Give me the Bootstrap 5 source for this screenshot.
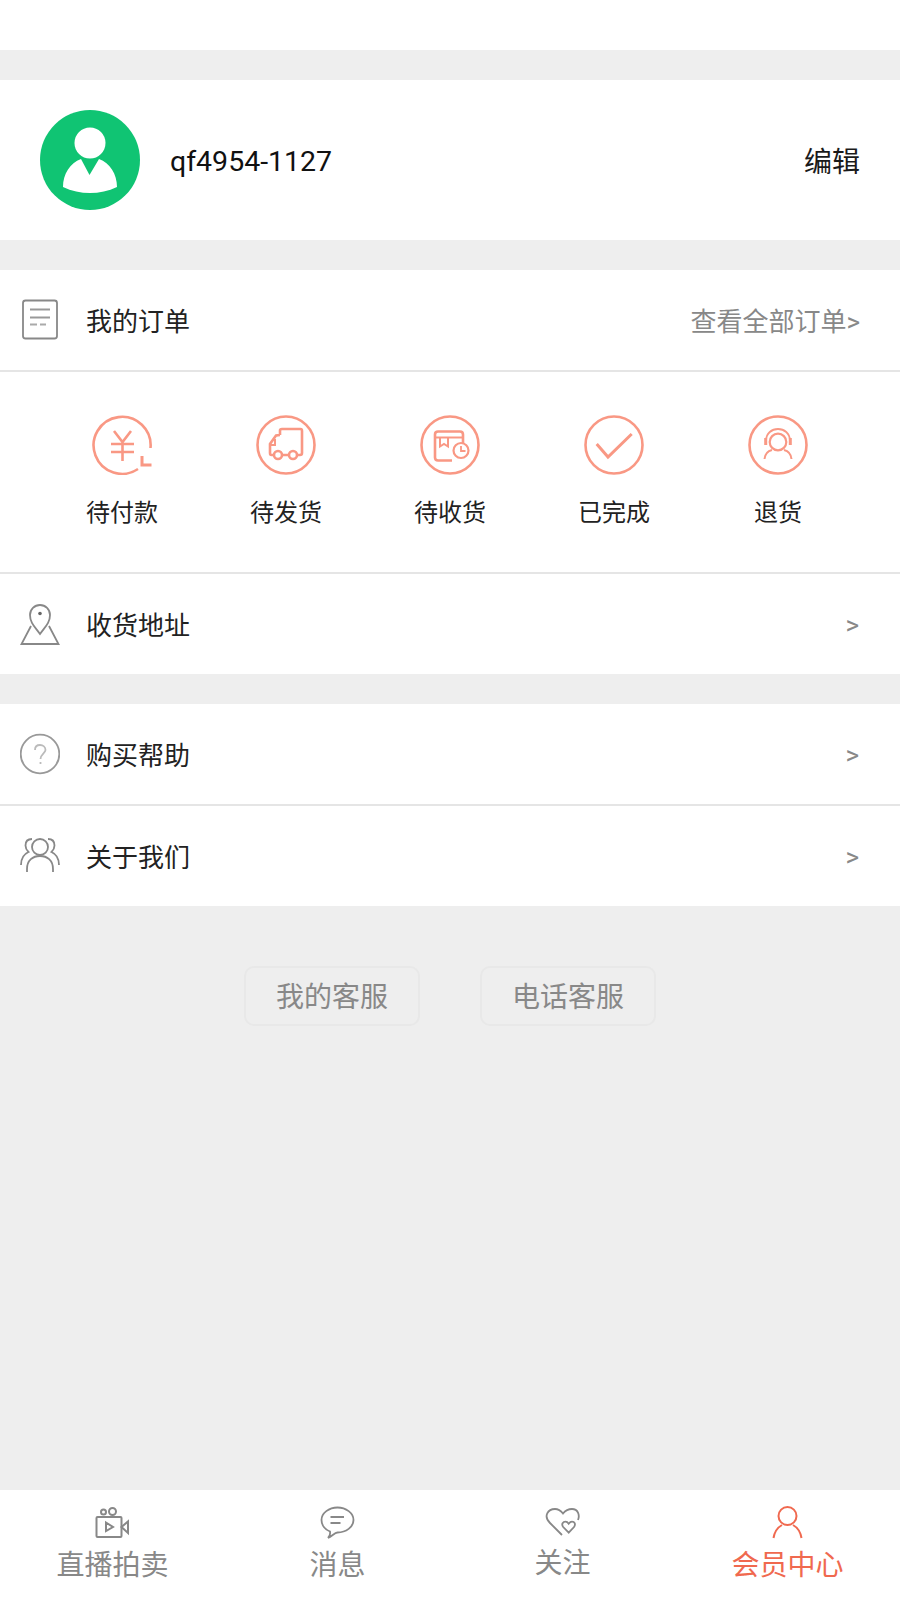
<!DOCTYPE html>
<html lang="zh">
<head>
<meta charset="utf-8">
<title>会员中心</title>
<link href="https://cdn.jsdelivr.net/npm/bootstrap@5.3.0/dist/css/bootstrap.min.css" rel="stylesheet">
<style>
html,body{height:100%}
body{background:#eee;font-family:Roboto,"Noto Sans CJK SC",sans-serif;color:#333}
.shell{height:1600px;width:900px;overflow:hidden}
.top-strip{height:50px;margin-bottom:30px}
.profile-row{height:160px;padding:0 40px;margin-bottom:30px}
.avatar-ic{width:100px;height:100px}
.user-name{font-size:28.5px;color:#111;margin-left:30px;line-height:1;padding-top:5px}
.edit-link{font-size:28px;color:#1a1a1a;line-height:1;padding-top:6px}
.menu-row{height:100px;padding:0 40px 0 20px;font-size:26px;line-height:1;color:#222}
.menu-row>span{padding-top:3px}
.menu-ic{width:40px;height:50px;margin-right:26px;flex:none}
.menu-more{font-size:26px;color:#888}
.menu-row>.menu-arrow{font-size:26px;color:#888;padding:2px 1px 0 0}
.line{height:2px;background:#e5e5e5}
.status-row{height:200px;padding:43px 40px 0}
.status-cell{width:164px;font-size:24px;line-height:1;color:#222;text-decoration:none}
.status-ic{width:60px;height:60px;margin-bottom:26px}
.gap-block{margin-bottom:30px}
.help-btn{width:176px;height:60px;font-size:28px;line-height:1;color:#888;background:#eee;border:2px solid #e8e8e8;border-radius:10px;padding:4px 0 0}
.help-btn:hover{color:#888;background:#eee;border-color:#e8e8e8}
.help-bar{gap:60px;padding-top:60px}
.tab-bar{height:110px;padding-top:14px}
.tab-cell{width:225px;font-size:28px;line-height:1;color:#888;text-decoration:none}
.tab-cell svg{width:40px;height:40px;margin-bottom:8px}
.tab-on{color:#f0694f}
.tab-cell.tab-up svg{margin-bottom:6px}
</style>
</head>
<body>
<div class="shell d-flex flex-column">
  <div class="top-strip bg-white"></div>

  <div class="profile-row bg-white d-flex align-items-center">
    <svg class="avatar-ic" viewBox="0 0 100 100"><circle cx="50" cy="50" r="50" fill="#10c473"/><circle cx="50" cy="33" r="15.5" fill="#fff"/><path d="M41 49 49.5 65 59 49C70 53 77 64 77 77 60 85 40 85 23 77 23 64 30 53 41 49Z" fill="#fff"/></svg>
    <span class="user-name">qf4954-1127</span>
    <span class="edit-link ms-auto">编辑</span>
  </div>

  <div class="gap-block bg-white">
    <div class="menu-row d-flex align-items-center">
      <svg class="menu-ic" viewBox="0 0 40 50" fill="none" stroke="#888" stroke-width="1.800"><rect x="3" y="5.500" width="34" height="38" rx="2.500"/><path d="M10 14.500H30M10 22.500H30" stroke="#999"/><path d="M10 29.500H17M20 29.500H26" stroke="#aaa"/></svg>
      <span>我的订单</span>
      <span class="menu-more ms-auto">查看全部订单&gt;</span>
    </div>
    <div class="line"></div>
    <div class="status-row d-flex">
      <a class="status-cell d-flex flex-column align-items-center" href="#">
        <svg class="status-ic" viewBox="0 0 60 60" fill="none" stroke="#f99884" stroke-width="2.600"><path d="M58.500 33A28.500 28.500 0 1 0 46 54"/><path d="M50 41V50H59.500" stroke-width="3"/><path d="M22 16 30.500 27 39 16M19 29H42M19 37H42M30.500 27V46"/></svg>
        待付款
      </a>
      <a class="status-cell d-flex flex-column align-items-center" href="#">
        <svg class="status-ic" viewBox="0 0 60 60" fill="none" stroke="#f99884" stroke-width="2.600"><circle cx="30" cy="30" r="28.500"/><path d="M24 20V15.500Q24 14 26 14H44.500Q46 14 46 16V38Q46 40 44 40H41M33 40H26M18 40H15.500Q14 40 14 38V29L20 20.500Q21 20 24 20"/><path d="M19 24V30H14" stroke-width="2"/><circle cx="22" cy="40" r="4"/><circle cx="37" cy="40" r="4"/></svg>
        待发货
      </a>
      <a class="status-cell d-flex flex-column align-items-center" href="#">
        <svg class="status-ic" viewBox="0 0 60 60" fill="none" stroke="#f99884" stroke-width="2.600"><circle cx="30" cy="30" r="28.500"/><path d="M32 45.500H18Q15 45.500 15 42.500V19.500Q15 16.500 18 16.500H40Q43 16.500 43 19.500V28"/><path d="M15 22.500H43" stroke-width="2"/><path d="M20 23V31.500L24 29 28 31.500V23" stroke-width="2"/><circle cx="41" cy="35.500" r="7.500" stroke-width="2.200"/><path d="M41 31V36H45.500" stroke-width="1.800"/></svg>
        待收货
      </a>
      <a class="status-cell d-flex flex-column align-items-center" href="#">
        <svg class="status-ic" viewBox="0 0 60 60" fill="none" stroke="#f99884" stroke-width="2.600"><circle cx="30" cy="30" r="28.500"/><path d="M12.700 29 24 42 47.700 19" stroke-width="3"/></svg>
        已完成
      </a>
      <a class="status-cell d-flex flex-column align-items-center" href="#">
        <svg class="status-ic" viewBox="0 0 60 60" fill="none" stroke="#f99884" stroke-width="2.600"><circle cx="30" cy="30" r="28.500"/><circle cx="30" cy="27" r="8.300" stroke-width="2.200"/><path d="M18 26C18 10 42 10 42 26" stroke-width="1.800"/><path d="M17.700 23V30M42.300 23V30" stroke-width="3"/><path d="M16.500 44C17 39 20 36 24 35M43.500 44C43 39 40 36 36 35" stroke-width="2"/></svg>
        退货
      </a>
    </div>
    <div class="line"></div>
    <div class="menu-row d-flex align-items-center">
      <svg class="menu-ic" viewBox="0 0 40 50" fill="none" stroke="#888" stroke-width="1.800"><path d="M20 35C15 28 10 24 10 16A10 10 0 0 1 30 16C30 24 25 28 20 35Z"/><circle cx="20" cy="14.500" r="1.800" fill="#666" stroke="none"/><path d="M11 27 1.500 45H38.500L29 27"/></svg>
      <span>收货地址</span>
      <span class="menu-arrow ms-auto">&gt;</span>
    </div>
  </div>

  <div class="bg-white">
    <div class="menu-row d-flex align-items-center">
      <svg class="menu-ic" viewBox="0 0 40 50" fill="none" stroke="#999" stroke-width="1.800"><circle cx="20" cy="25" r="19.300"/><path d="M15 21C15 17 18 16 20 16 23 16 25.500 18 25.500 21 25.500 24 20.500 25 20.500 30" stroke="#bbb"/><path d="M20.500 33V35" stroke="#bbb"/></svg>
      <span>购买帮助</span>
      <span class="menu-arrow ms-auto">&gt;</span>
    </div>
    <div class="line"></div>
    <div class="menu-row d-flex align-items-center">
      <svg class="menu-ic" viewBox="0 0 40 50" fill="none" stroke="#888" stroke-width="1.800"><circle cx="20" cy="16" r="8"/><path d="M7 41V38C7 29 13 25 20 25S33 29 33 38V41"/><path d="M12 8C7.500 8 5.500 11 5.500 14.500 5.500 17 7 19.500 8.500 21 4 23 1 27 1 34M28 8C32.500 8 34.500 11 34.500 14.500 34.500 17 33 19.500 31.500 21 36 23 39 27 39 34"/></svg>
      <span>关于我们</span>
      <span class="menu-arrow ms-auto">&gt;</span>
    </div>
  </div>

  <div class="help-bar d-flex justify-content-center flex-grow-1">
    <button class="btn help-btn" type="button">我的客服</button>
    <button class="btn help-btn" type="button">电话客服</button>
  </div>

  <nav class="tab-bar bg-white d-flex">
    <a class="tab-cell d-flex flex-column align-items-center" href="#">
      <svg viewBox="0 0 40 40" fill="none" stroke="#888" stroke-width="2"><rect x="3.500" y="13" width="25" height="20" rx="1"/><circle cx="10.500" cy="8" r="2.500"/><circle cx="19.500" cy="7.500" r="3.500"/><path d="M13 18.500 20 23 13 27Z"/><path d="M28.500 23 35 17.500V29Z"/></svg>
      直播拍卖
    </a>
    <a class="tab-cell d-flex flex-column align-items-center" href="#">
      <svg viewBox="0 0 40 40" fill="none" stroke="#888" stroke-width="1.800"><path d="M10 34C12 32 12.500 30 12 27.500 7 25.500 3.500 21 3.500 16 3.500 9 11 3.500 19.500 3.500S35.500 9 35.500 16 28 28.500 19.500 28.500C16.500 28.500 14 32.500 10 34Z"/><path d="M12.500 13H26M12.500 19H22.500"/></svg>
      消息
    </a>
    <a class="tab-cell tab-up d-flex flex-column align-items-center" href="#">
      <svg viewBox="0 0 40 40" fill="none" stroke="#888" stroke-width="1.800"><path d="M19 31 7 19C0 12 5 5 12 5 15 5 18 7 20 9.500 22 7 26 5 29 5 35 5 37 11 35 16"/><path d="M25.700 28.700 20.200 23C18 20 20 17.700 22.500 17.700 24 17.700 25 18.700 25.700 19.700 26.500 18.700 27.500 17.700 29 17.700 31.500 17.700 33 20 31 23Z"/></svg>
      关注
    </a>
    <a class="tab-cell tab-on d-flex flex-column align-items-center" href="#">
      <svg viewBox="0 0 40 40" fill="none" stroke="#f0694f" stroke-width="2"><circle cx="19.500" cy="12" r="9"/><path d="M5.500 34C6.500 28 9.500 23.500 14 21M33.500 34C32.500 28 29.500 23.500 25 21"/></svg>
      会员中心
    </a>
  </nav>
</div>
<script src="https://cdn.jsdelivr.net/npm/bootstrap@5.3.0/dist/js/bootstrap.bundle.min.js"></script>
</body>
</html>
